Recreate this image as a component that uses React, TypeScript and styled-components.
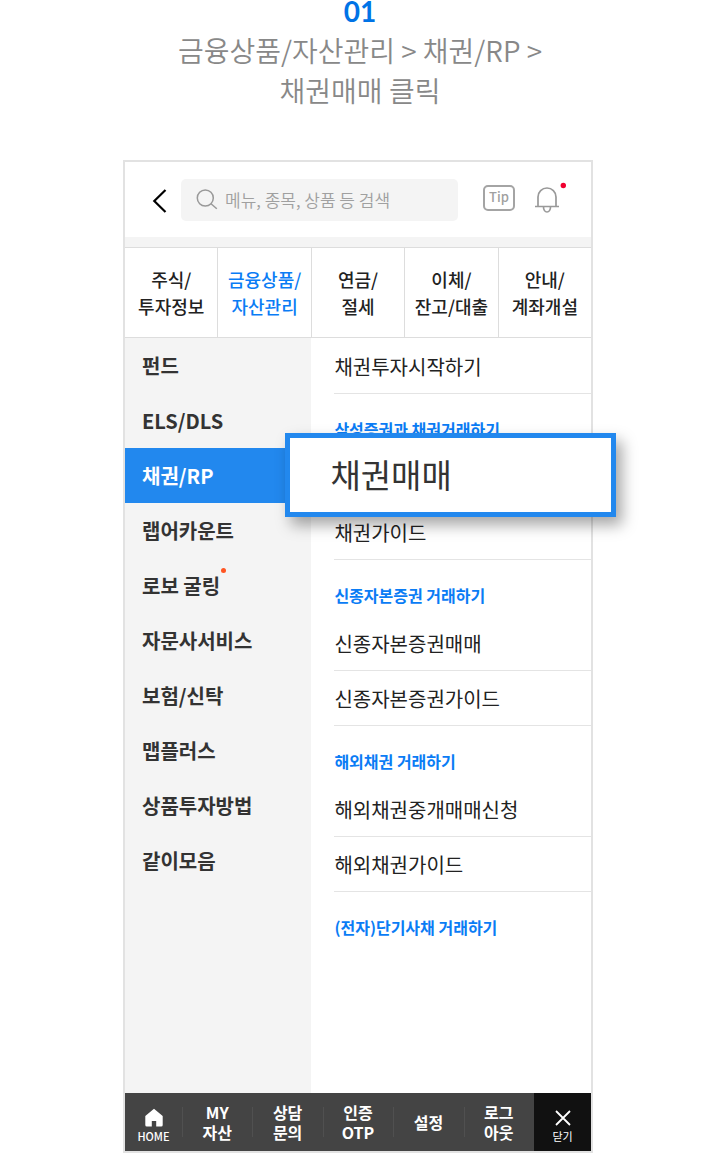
import React from "react";
import styled, { createGlobalStyle } from "styled-components";

const GlobalStyle = createGlobalStyle`
  * { box-sizing: border-box; }
  body {
    margin: 0;
    background: #fff;
    font-family: "Noto Sans CJK KR", "Noto Sans", sans-serif;
    color: #222;
  }
  button, input { font: inherit; color: inherit; margin: 0; }
  button { border: 0; padding: 0; background: none; cursor: pointer; }
  a { color: inherit; text-decoration: none; }
  ul, h1, h2, p { margin: 0; padding: 0; list-style: none; font-weight: inherit; }
`;

const Page = styled.main`
  display: flex;
  flex-direction: column;
  align-items: center;
  overflow-x: hidden;
`;

const StepHeader = styled.header`
  text-align: center;
  padding-bottom: 50px;
`;

const StepNumber = styled.p`
  font: 700 28px/22px Lato, sans-serif;
  color: #0073e6;
  padding-bottom: 8px;
`;

const StepTitle = styled.h1`
  font-size: 28px;
  line-height: 40px;
  font-weight: 350;
  color: #888;
`;

const PhoneArea = styled.div`
  display: flex;
  justify-content: center;
  width: 100%;
  padding: 0 4px 1px 0;
`;

const Phone = styled.section`
  width: 100%;
  max-width: 470px;
  border: 2px solid #e2e2e2;
  background: #fff;
`;

const SearchBar = styled.div`
  display: flex;
  align-items: center;
  padding: 17px 22px 16px 24px;
  border-bottom: 10px solid #f4f4f4;
`;

const IconButton = styled.button`
  display: flex;
  flex: none;
`;

const SearchField = styled.label`
  flex: 1;
  min-width: 0;
  height: 42px;
  display: flex;
  align-items: center;
  gap: 7px;
  margin: 0 25px 0 10px;
  padding: 0 15px;
  background: #f4f4f4;
  border-radius: 5px;
`;

const SearchInput = styled.input`
  flex: 1;
  min-width: 0;
  height: 28px;
  border: 0;
  padding: 0 0 2px;
  background: transparent;
  font-size: 17px;
  outline: 0;
  &::placeholder { color: #a0a0a0; opacity: 1; font-weight: 350; }
`;

const TipButton = styled.button`
  width: 32px;
  height: 26px;
  margin: 0 18px 4px 0;
  border: 2px solid #a4a4a4;
  border-radius: 5px;
  color: #a0a0a0;
  font-size: 13px;
  line-height: 18px;
  font-weight: 500;
  padding-bottom: 2px;
`;

const Tabs = styled.nav`
  display: flex;
  border-top: 1px solid #ddd;
  border-bottom: 1px solid #ddd;
`;

const Tab = styled.button<{ $active?: boolean }>`
  flex: 1;
  height: 89px;
  font-size: 18px;
  line-height: 27px;
  font-weight: 500;
  white-space: nowrap;
  color: ${(p) => (p.$active ? "#0a7cf5" : "#222")};
  & + & { border-left: 1px solid #ddd; }
`;

const Menu = styled.div`
  display: flex;
`;

const Categories = styled.ul`
  flex: none;
  width: 40%;
  background: #f4f4f4;
`;

const Category = styled.button<{ $active?: boolean }>`
  display: block;
  width: 100%;
  height: 55px;
  padding-left: 17px;
  text-align: left;
  font-size: 20px;
  line-height: 30px;
  font-weight: 700;
  color: ${(p) => (p.$active ? "#fff" : "#333")};
  background: ${(p) => (p.$active ? "#2288ee" : "transparent")};
`;

const CategoryLabel = styled.span`
  position: relative;
`;

const NewDot = styled.i`
  position: absolute;
  top: -3px;
  right: -6px;
  width: 5px;
  height: 5px;
  border-radius: 50%;
  background: #ff5522;
`;

const SubMenu = styled.div`
  flex: 1;
  min-width: 0;
  padding: 1px 0 145px 23px;
`;

const GroupTitle = styled.h2`
  height: 56px;
  padding-top: 23px;
  font-size: 16px;
  line-height: 24px;
  font-weight: 700;
  color: #0a7cf5;
`;

const SubItem = styled.li`
  position: relative;
  height: 55px;
  border-bottom: 1px solid #e4e4e4;
`;

const SubLink = styled.a`
  display: block;
  padding-top: 1px;
  font-size: 20px;
  line-height: 54px;
`;

const Callout = styled.a`
  position: absolute;
  z-index: 1;
  top: -17px;
  left: -49px;
  right: -25px;
  height: 84px;
  padding-left: 40px;
  border: 5px solid #2288ee;
  background: #fff;
  box-shadow: 6px 8px 14px rgba(0, 0, 0, 0.35);
  font-size: 33px;
  line-height: 72px;
  color: #333;
`;

const BottomBar = styled.nav`
  display: flex;
  height: 58px;
  background: #444;
  color: #fff;
`;

const BarButton = styled.button`
  flex: 1;
  font-size: 16px;
  line-height: 20px;
  font-weight: 700;
  background: linear-gradient(#505050, #505050) left center / 1px 30px no-repeat;
`;

const BarIconButton = styled.button<{ $dark?: boolean }>`
  flex: none;
  width: 57px;
  display: flex;
  flex-direction: column;
  align-items: center;
  justify-content: flex-end;
  padding-bottom: 7px;
  font-size: 11px;
  line-height: 16px;
  font-weight: ${(p) => (p.$dark ? 400 : 500)};
  background: ${(p) => (p.$dark ? "#111" : "transparent")};
`;

const tabs = [
  ["주식/", "투자정보"],
  ["금융상품/", "자산관리"],
  ["연금/", "절세"],
  ["이체/", "잔고/대출"],
  ["안내/", "계좌개설"],
];

const categories = [
  "펀드", "ELS/DLS", "채권/RP", "랩어카운트", "로보 굴링",
  "자문사서비스", "보험/신탁", "맵플러스", "상품투자방법", "같이모음",
];

const groups = [
  { title: "", items: ["채권투자시작하기"] },
  { title: "삼성증권과 채권거래하기", items: ["채권매매", "채권가이드"] },
  { title: "신종자본증권 거래하기", items: ["신종자본증권매매", "신종자본증권가이드"] },
  { title: "해외채권 거래하기", items: ["해외채권중개매매신청", "해외채권가이드"] },
  { title: "(전자)단기사채 거래하기", items: [] },
];

const barItems = [["MY", "자산"], ["상담", "문의"], ["인증", "OTP"], ["설정"], ["로그", "아웃"]];

const Lines = ({ lines }: { lines: string[] }) => (
  <>
    {lines.map((line, i) => (
      <React.Fragment key={line}>
        {i > 0 && <br />}
        {line}
      </React.Fragment>
    ))}
  </>
);

export default function App() {
  return (
    <Page>
      <GlobalStyle />
      <StepHeader>
        <StepNumber>01</StepNumber>
        <StepTitle>
          금융상품/자산관리 &gt; 채권/RP &gt;
          <br />
          채권매매 클릭
        </StepTitle>
      </StepHeader>
      <PhoneArea>
        <Phone>
          <SearchBar>
            <IconButton aria-label="뒤로">
              <svg width="22" height="28" viewBox="0 0 22 28" fill="none" stroke="#000" strokeWidth="2.2">
                <path d="M16.500 4 5.300 15l11.200 11" />
              </svg>
            </IconButton>
            <SearchField>
              <svg width="22" height="22" viewBox="0 0 22 22" fill="none" stroke="#999" strokeWidth="1.5">
                <circle cx="9.3" cy="9" r="8" />
                <path d="m15 14.800 5.800 5" />
              </svg>
              <SearchInput aria-label="검색" placeholder="메뉴, 종목, 상품 등 검색" />
            </SearchField>
            <TipButton>Tip</TipButton>
            <IconButton aria-label="알림">
              <svg width="36" height="36" viewBox="0 0 36 36" fill="none" stroke="#999" strokeWidth="1.7">
                <path d="M2 24.500h24M5 24.500V15a9 9 0 0 1 18 0v9.500M10.500 25a3.500 5 0 0 0 7 0" />
                <circle cx="30.300" cy="3.500" r="2.700" fill="#f00030" stroke="none" />
              </svg>
            </IconButton>
          </SearchBar>
          <Tabs>
            {tabs.map((lines, i) => (
              <Tab key={lines[0]} $active={i === 1}>
                <Lines lines={lines} />
              </Tab>
            ))}
          </Tabs>
          <Menu>
            <Categories>
              {categories.map((name) => (
                <li key={name}>
                  <Category $active={name === "채권/RP"}>
                    <CategoryLabel>
                      {name}
                      {name === "로보 굴링" && <NewDot />}
                    </CategoryLabel>
                  </Category>
                </li>
              ))}
            </Categories>
            <SubMenu>
              {groups.map((group) => (
                <section key={group.title}>
                  {group.title && <GroupTitle>{group.title}</GroupTitle>}
                  <ul>
                    {group.items.map((item) => (
                      <SubItem key={item}>
                        {item === "채권매매" ? (
                          <Callout href="#">{item}</Callout>
                        ) : (
                          <SubLink href="#">{item}</SubLink>
                        )}
                      </SubItem>
                    ))}
                  </ul>
                </section>
              ))}
            </SubMenu>
          </Menu>
          <BottomBar>
            <BarIconButton>
              <svg width="20" height="20" viewBox="0 0 20 20" fill="#fff">
                <path d="M10 .8 1.300 8V17a1.500 1.500 0 0 0 1.500 1.500h5V13h4.400v5.500h5a1.500 1.500 0 0 0 1.500-1.500V8z" />
              </svg>
              HOME
            </BarIconButton>
            {barItems.map((lines) => (
              <BarButton key={lines[0]}>
                <Lines lines={lines} />
              </BarButton>
            ))}
            <BarIconButton $dark>
              <svg width="20" height="20" viewBox="0 0 20 20" stroke="#fff" strokeWidth="1.800">
                <path d="m3 3 14 14M17 3 3 17" />
              </svg>
              닫기
            </BarIconButton>
          </BottomBar>
        </Phone>
      </PhoneArea>
    </Page>
  );
}
